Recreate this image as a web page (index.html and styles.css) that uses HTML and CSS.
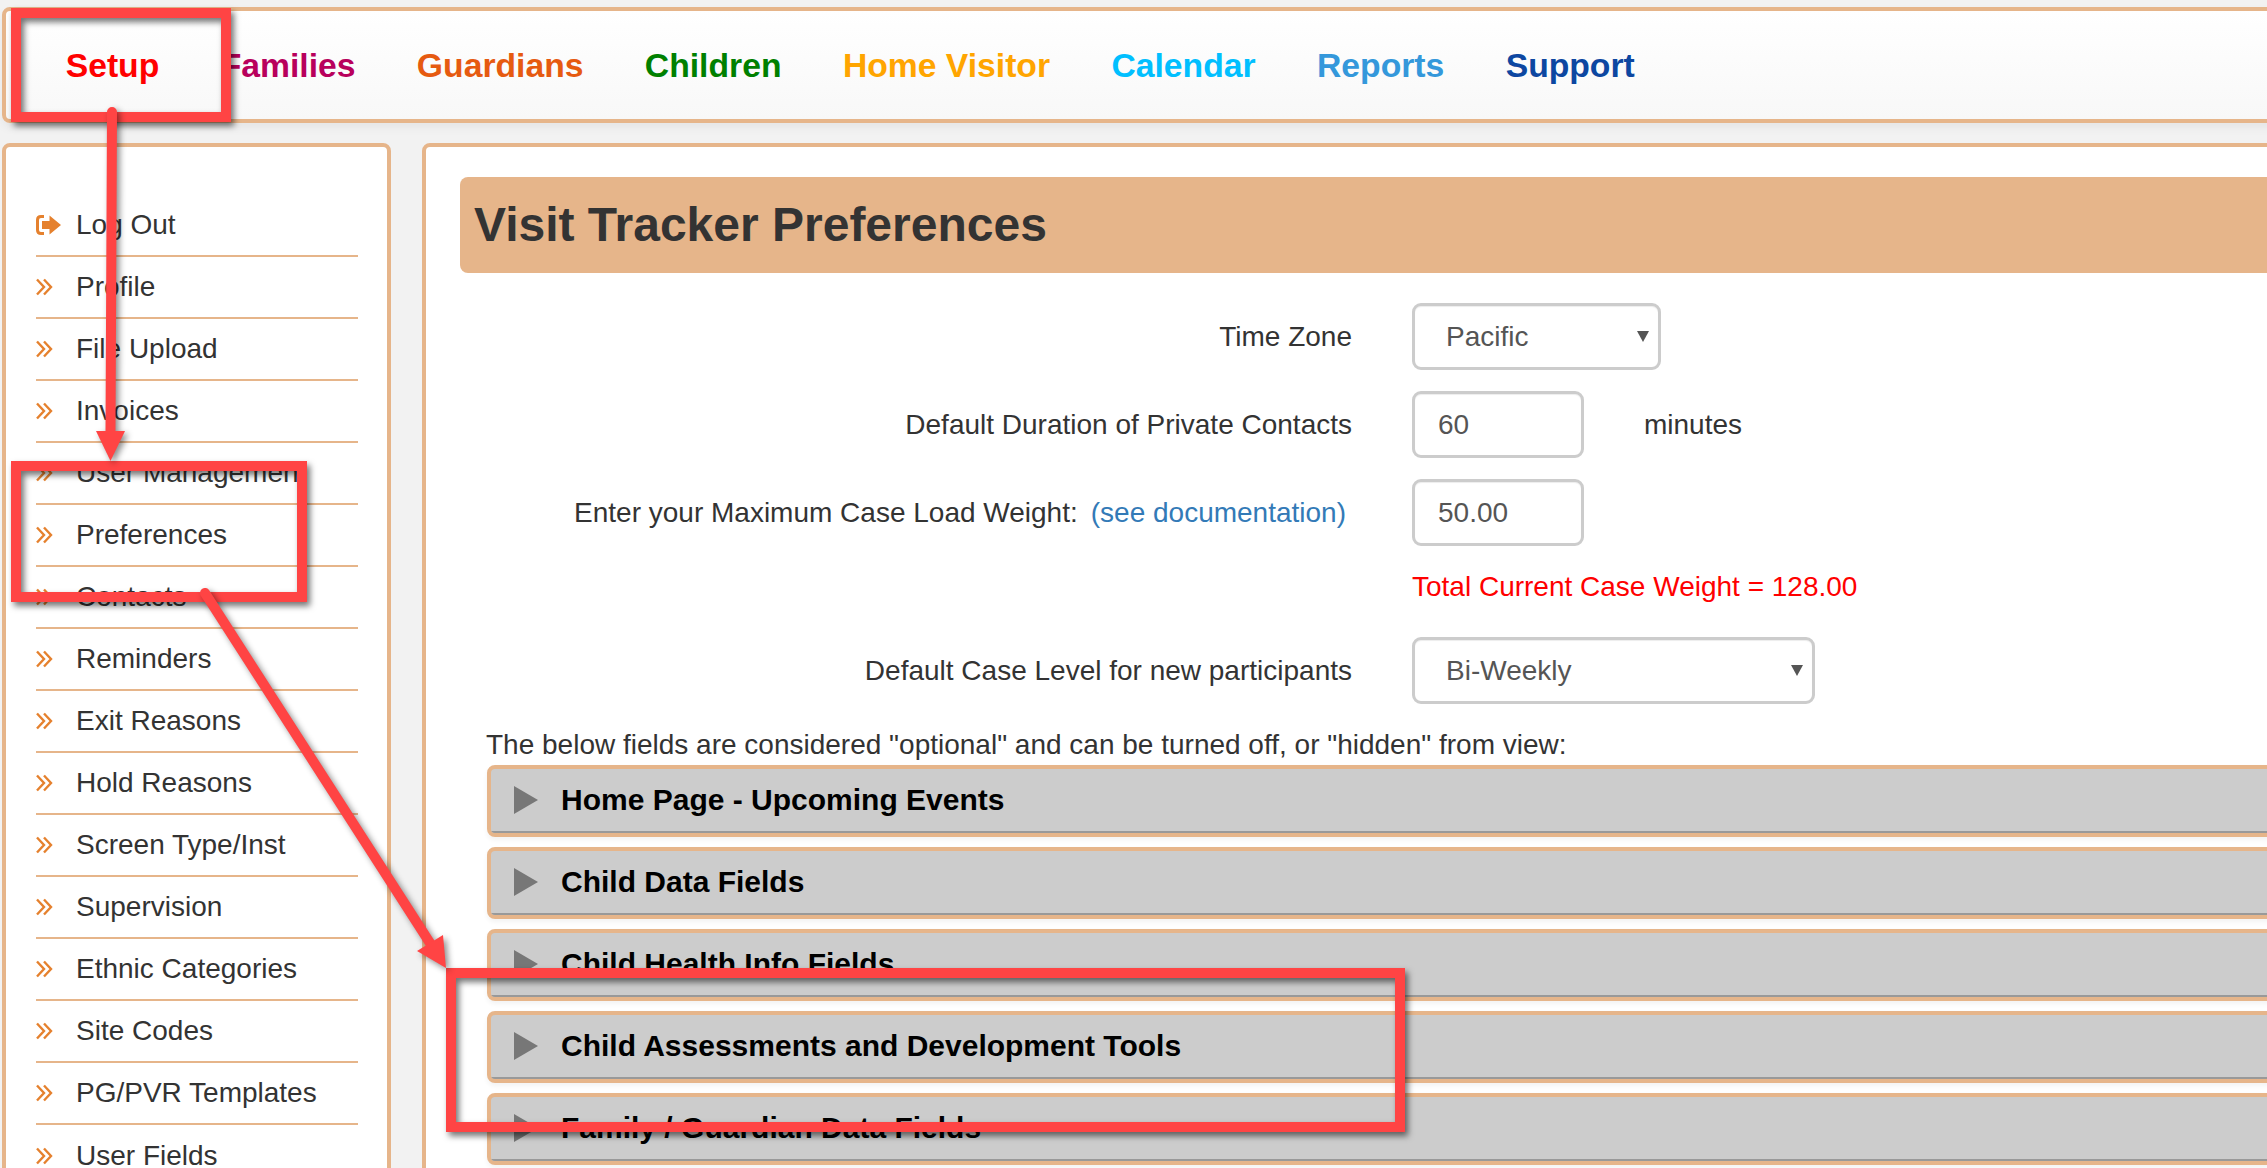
FILE: index.html
```html
<!DOCTYPE html>
<html lang="en">
<head>
<meta charset="utf-8">
<title>Visit Tracker Preferences</title>
<link rel="stylesheet" href="styles.css">
</head>
<body>
<div class="page">
  <header class="topbar">
    <nav class="nav">
      <a class="nav-item c-setup">Setup</a>
      <a class="nav-item c-families">Families</a>
      <a class="nav-item c-guardians">Guardians</a>
      <a class="nav-item c-children">Children</a>
      <a class="nav-item c-visitor">Home Visitor</a>
      <a class="nav-item c-calendar">Calendar</a>
      <a class="nav-item c-reports">Reports</a>
      <a class="nav-item c-support">Support</a>
    </nav>
  </header>
  <div class="layout">
    <aside class="sidebar">
      <ul class="menu">
        <li class="menu-row"><svg class="menu-icon menu-icon-logout" viewBox="0 0 25 20"><path class="i-stroke" d="M8 1.500H5Q1.500 1.500 1.500 5v10q0 3.500 3.500 3.500H8"/><path class="i-fill" d="M6 6h7.500V0.500L25 10 13.500 19.500V14H6z"/></svg><span>Log Out</span></li>
        <li class="menu-row"><svg class="menu-icon" viewBox="0 0 24 18"><path class="i-chev" d="M1 1.500l7 7.500-7 7.500M8 1.500l7 7.500-7 7.500"/></svg><span>Profile</span></li>
        <li class="menu-row"><svg class="menu-icon" viewBox="0 0 24 18"><path class="i-chev" d="M1 1.500l7 7.500-7 7.500M8 1.500l7 7.500-7 7.500"/></svg><span>File Upload</span></li>
        <li class="menu-row"><svg class="menu-icon" viewBox="0 0 24 18"><path class="i-chev" d="M1 1.500l7 7.500-7 7.500M8 1.500l7 7.500-7 7.500"/></svg><span>Invoices</span></li>
        <li class="menu-row"><svg class="menu-icon" viewBox="0 0 24 18"><path class="i-chev" d="M1 1.500l7 7.500-7 7.500M8 1.500l7 7.500-7 7.500"/></svg><span>User Management</span></li>
        <li class="menu-row"><svg class="menu-icon" viewBox="0 0 24 18"><path class="i-chev" d="M1 1.500l7 7.500-7 7.500M8 1.500l7 7.500-7 7.500"/></svg><span>Preferences</span></li>
        <li class="menu-row"><svg class="menu-icon" viewBox="0 0 24 18"><path class="i-chev" d="M1 1.500l7 7.500-7 7.500M8 1.500l7 7.500-7 7.500"/></svg><span>Contacts</span></li>
        <li class="menu-row"><svg class="menu-icon" viewBox="0 0 24 18"><path class="i-chev" d="M1 1.500l7 7.500-7 7.500M8 1.500l7 7.500-7 7.500"/></svg><span>Reminders</span></li>
        <li class="menu-row"><svg class="menu-icon" viewBox="0 0 24 18"><path class="i-chev" d="M1 1.500l7 7.500-7 7.500M8 1.500l7 7.500-7 7.500"/></svg><span>Exit Reasons</span></li>
        <li class="menu-row"><svg class="menu-icon" viewBox="0 0 24 18"><path class="i-chev" d="M1 1.500l7 7.500-7 7.500M8 1.500l7 7.500-7 7.500"/></svg><span>Hold Reasons</span></li>
        <li class="menu-row"><svg class="menu-icon" viewBox="0 0 24 18"><path class="i-chev" d="M1 1.500l7 7.500-7 7.500M8 1.500l7 7.500-7 7.500"/></svg><span>Screen Type/Inst</span></li>
        <li class="menu-row"><svg class="menu-icon" viewBox="0 0 24 18"><path class="i-chev" d="M1 1.500l7 7.500-7 7.500M8 1.500l7 7.500-7 7.500"/></svg><span>Supervision</span></li>
        <li class="menu-row"><svg class="menu-icon" viewBox="0 0 24 18"><path class="i-chev" d="M1 1.500l7 7.500-7 7.500M8 1.500l7 7.500-7 7.500"/></svg><span>Ethnic Categories</span></li>
        <li class="menu-row"><svg class="menu-icon" viewBox="0 0 24 18"><path class="i-chev" d="M1 1.500l7 7.500-7 7.500M8 1.500l7 7.500-7 7.500"/></svg><span>Site Codes</span></li>
        <li class="menu-row"><svg class="menu-icon" viewBox="0 0 24 18"><path class="i-chev" d="M1 1.500l7 7.500-7 7.500M8 1.500l7 7.500-7 7.500"/></svg><span>PG/PVR Templates</span></li>
        <li class="menu-row"><svg class="menu-icon" viewBox="0 0 24 18"><path class="i-chev" d="M1 1.500l7 7.500-7 7.500M8 1.500l7 7.500-7 7.500"/></svg><span>User Fields</span></li>
      </ul>
    </aside>
    <main class="content">
      <h1 class="title">Visit Tracker Preferences</h1>
      <form class="form">
        <div class="form-row">
          <label class="form-label">Time Zone</label>
          <div class="select-wrap select-short"><select class="control select"><option>Pacific</option></select></div>
        </div>
        <div class="form-row">
          <label class="form-label">Default Duration of Private Contacts</label>
          <input class="control input" value="60">
          <span class="unit">minutes</span>
        </div>
        <div class="form-row">
          <label class="form-label form-label-link">Enter your Maximum Case Load Weight:<a class="doc-link">(see documentation)</a></label>
          <input class="control input" value="50.00">
        </div>
        <div class="form-row form-row-note">
          <span class="form-label"></span>
          <span class="note">Total Current Case Weight = 128.00</span>
        </div>
        <div class="form-row">
          <label class="form-label">Default Case Level for new participants</label>
          <div class="select-wrap select-long"><select class="control select"><option>Bi-Weekly</option></select></div>
        </div>
      </form>
      <p class="intro">The below fields are considered "optional" and can be turned off, or "hidden" from view:</p>
      <div class="accordions">
        <div class="acc"><div class="acc-head"><i class="acc-arrow"></i><span>Home Page - Upcoming Events</span></div></div>
        <div class="acc"><div class="acc-head"><i class="acc-arrow"></i><span>Child Data Fields</span></div></div>
        <div class="acc"><div class="acc-head"><i class="acc-arrow"></i><span>Child Health Info Fields</span></div></div>
        <div class="acc"><div class="acc-head"><i class="acc-arrow"></i><span>Child Assessments and Development Tools</span></div></div>
        <div class="acc"><div class="acc-head"><i class="acc-arrow"></i><span>Family / Guardian Data Fields</span></div></div>
      </div>
    </main>
  </div>
  <svg class="annotations" viewBox="0 0 2267 1168" width="2267" height="1168">
    <rect class="mark-box" x="16" y="13" width="210" height="104"/>
    <rect class="mark-box" x="16" y="466" width="286" height="131"/>
    <rect class="mark-box" x="451" y="973" width="949" height="154"/>
    <g class="mark-arrow">
      <path class="mark-line" d="M112 112L110.500 432"/>
      <path class="mark-head" d="M96 431H125L110.500 461z"/>
    </g>
    <g class="mark-arrow">
      <path class="mark-line" d="M205 593L430 943"/>
      <path class="mark-head" d="M443 935L417 951L446 968z"/>
    </g>
  </svg>
</div>
</body>
</html>
```
FILE: styles.css
```css
* { box-sizing: border-box; }
html, body { margin: 0; height: 100%; overflow: hidden; }
body {
  background: #f2f2f2;
  color: #333;
  font-family: "Liberation Sans", Arial, sans-serif;
  font-size: 28px;
  line-height: 1.42857;
}
.page {
  position: relative;
  width: 2400px;
  height: 1168px;
  overflow: hidden;
  padding: 7px 0 0 2px;
}

/* top bar */
.topbar {
  height: 116px;
  border: 4px solid #e6b58a;
  border-radius: 8px;
  background: linear-gradient(#fff, #f8f8f8);
  box-shadow: 0 5px 10px rgba(0, 0, 0, .05);
}
.nav { display: flex; align-items: center; height: 100%; padding-left: 29px; }
.nav-item { padding: 0 30.7px; font-size: 33.7px; font-weight: 700; line-height: 1.2; }
.c-setup { color: #f00; }
.c-families { color: #b8005c; }
.c-guardians { color: #e65a10; }
.c-children { color: #008000; }
.c-visitor { color: #ffa500; }
.c-calendar { color: #00bfff; }
.c-reports { color: #3498db; }
.c-support { color: #0d47a1; }

/* columns */
.layout { display: flex; gap: 31px; margin-top: 20px; align-items: stretch; }
.sidebar {
  flex: 0 0 389px;
  border: 4px solid #e6b58a;
  border-radius: 8px;
  background: #fff;
  padding: 48px 29px 0 30px;
}
.menu { list-style: none; margin: 0; padding: 0; }
.menu-row {
  display: flex;
  align-items: center;
  height: 62px;
  border-bottom: 2px solid #e6b58a;
}
.menu-row:last-child { border-bottom: 0; }
.menu-icon { flex: none; width: 24px; height: 18px; margin-right: 16px; }
.menu-icon-logout { width: 25px; height: 20px; margin-right: 15px; }
.i-stroke { fill: none; stroke: #e5812e; stroke-width: 3; }
.i-fill { fill: #e5812e; }
.i-chev { fill: none; stroke: #e5812e; stroke-width: 2.400; }

/* main */
.content {
  flex: 1;
  min-width: 0;
  border: 4px solid #e6b58a;
  border-radius: 8px;
  background: #fff;
  padding: 30px 0 40px 34px;
}
.title {
  height: 96px;
  margin: 0;
  padding-left: 14px;
  border-radius: 8px;
  background: #e6b58a;
  font-size: 48px;
  font-weight: 700;
  line-height: 96px;
  color: #333;
}
.form { display: flex; flex-direction: column; gap: 21px; margin-top: 30px; }
.form-row { display: flex; align-items: center; min-height: 67px; }
.form-row-note { min-height: 49px; padding-bottom: 9px; }
.form-label { flex: 0 0 892px; margin-right: 60px; text-align: right; }
.form-label-link { padding-right: 6px; }
.doc-link { margin-left: 13px; color: #337ab7; }
.control {
  height: 67px;
  border: 3px solid #ccc;
  border-radius: 9px;
  background: #fff;
  color: #555;
  font: inherit;
  box-shadow: inset 0 1px 1px rgba(0, 0, 0, .075);
}
.input { width: 172px; padding: 0 23px; }
.unit { margin-left: 60px; }
.note { color: #f00; }
.select-wrap { position: relative; }
.select-wrap::after {
  content: "";
  position: absolute;
  top: 28px;
  right: 12px;
  border-style: solid;
  border-width: 11px 6px 0;
  border-color: #555 transparent transparent;
}
.select {
  display: block;
  width: 100%;
  padding: 0 0 0 31px;
  appearance: none;
  -webkit-appearance: none;
}
.select-short { width: 249px; }
.select-long { width: 403px; }
.intro { margin: 21px 0 0 26px; line-height: 40px; }
.accordions { display: flex; flex-direction: column; gap: 10px; margin: 0 0 0 27px; }
.acc {
  height: 72px;
  border: 4px solid #e6b58a;
  border-radius: 8px;
  background: #e6b58a;
  box-shadow: 0 3px 5px rgba(0, 0, 0, .05);
  overflow: hidden;
}
.acc-head {
  display: flex;
  align-items: center;
  height: 100%;
  padding-left: 23px;
  background: #ccc;
  border-bottom: 2px solid #999;
  color: #000;
  font-size: 30px;
  font-weight: 700;
}
.acc-arrow {
  flex: none;
  width: 0;
  height: 0;
  margin-right: 23px;
  border-style: solid;
  border-width: 14px 0 14px 24px;
  border-color: transparent transparent transparent #777;
}

/* red call-outs laid over the screenshot */
.annotations { position: absolute; top: 0; left: 0; pointer-events: none; }
.mark-box {
  fill: none;
  stroke: #ff4444;
  stroke-width: 10;
  filter: drop-shadow(3px 4px 3px rgba(0, 0, 0, .55));
}
.mark-arrow { filter: drop-shadow(3px 3px 3px rgba(0, 0, 0, .45)); }
.mark-line { fill: none; stroke: #ff4444; stroke-width: 10; stroke-linecap: round; }
.mark-head { fill: #ff4444; }
```
